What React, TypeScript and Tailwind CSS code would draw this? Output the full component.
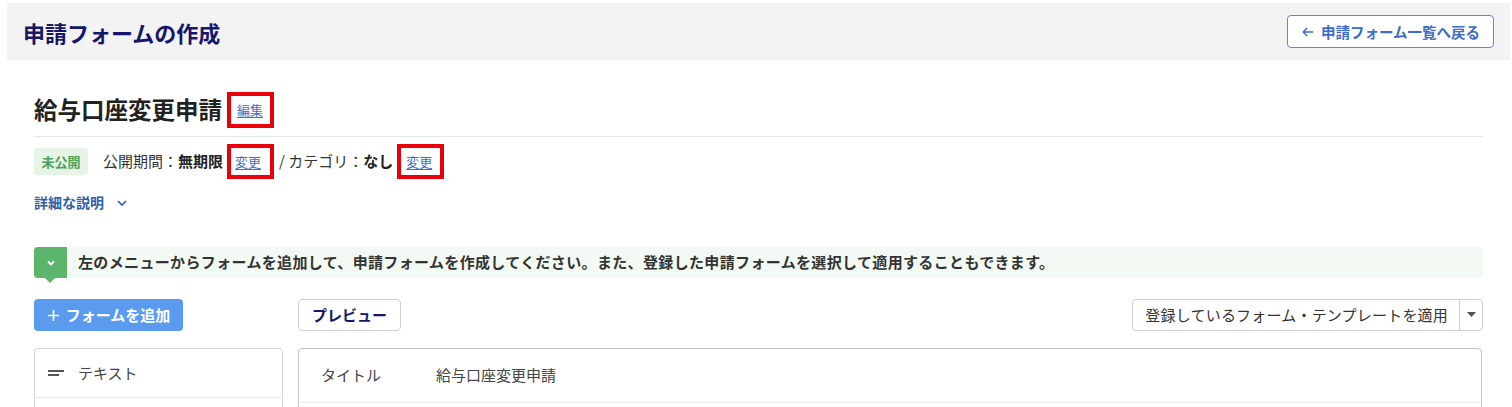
import React from "react";

const font = { fontFamily: '"Noto Sans CJK JP", "Noto Sans", sans-serif' };

function Link({ children }: { children: React.ReactNode }) {
  return (
    <span className="text-[13px] text-[#3f6fc6] underline underline-offset-2">{children}</span>
  );
}

export default function App() {
  return (
    <div style={font} className="bg-white w-[1512px] h-[407px] overflow-hidden pt-[3px] pl-[7px] pr-[2px] text-[#333]">
      {/* header */}
      <div className="h-[57px] bg-[#f3f3f3] flex items-center justify-between pl-4 pr-4">
        <h1 className="text-[22px] font-bold text-[#16166a] leading-none">申請フォームの作成</h1>
        <button className="h-[33px] w-[207px] flex items-center justify-center gap-1.5 bg-white border border-[#5b8ad6] rounded text-[#3a6cc8] text-[14.5px] font-bold">
          <svg width="14" height="14" viewBox="0 0 16 16" fill="none" stroke="currentColor" strokeWidth="1.6">
            <path d="M14 8H2.5M7 3.5L2.5 8 7 12.5" />
          </svg>
          申請フォーム一覧へ戻る
        </button>
      </div>

      <div className="px-[27px]">
        {/* title */}
        <div className="mt-[32px] h-[36px] flex items-center">
          <h2 className="text-[23.5px] font-bold text-[#222] leading-none">給与口座変更申請</h2>
          <div className="ml-[5px] h-[36px] w-[47px] border-[4px] border-[#e8000b] flex items-center pl-[6px]">
            <Link>編集</Link>
          </div>
        </div>
        <div className="mt-[8px] h-px bg-[#e6e6e6]" />

        {/* status row */}
        <div className="mt-[7px] h-[35px] flex items-center text-[15px] text-[#333]">
          <span className="h-[27px] w-[54px] rounded bg-[#e6f4e8] text-[#4ba25a] text-[13px] font-bold flex items-center justify-center">未公開</span>
          <span className="ml-[15px]">公開期間：</span>
          <span className="font-bold text-[#222]">無期限</span>
          <div className="ml-[4px] h-[35px] w-[47px] border-[4px] border-[#e8000b] flex items-center pl-[4px]">
            <Link>変更</Link>
          </div>
          <span className="ml-[5px]">/ カテゴリ：</span>
          <span className="font-bold text-[#222]">なし</span>
          <div className="ml-[4px] h-[35px] w-[47px] border-[4px] border-[#e8000b] flex items-center pl-[5px]">
            <Link>変更</Link>
          </div>
        </div>

        {/* details */}
        <div className="mt-[13px] flex items-center gap-[12px] text-[14px] font-bold text-[#2e5faa]">
          <span>詳細な説明</span>
          <svg width="12" height="12" viewBox="0 0 12 12" fill="none" stroke="currentColor" strokeWidth="1.6">
            <path d="M2 4l4 4 4-4" />
          </svg>
        </div>

        {/* banner */}
        <div className="mt-[34px] h-[31px] bg-[#f3faf4] rounded-r flex items-center">
          <div className="relative h-[31px] w-[33px] bg-[#5bb56b] rounded-l flex items-center justify-center">
            <svg width="10" height="10" viewBox="0 0 10 10" fill="none" stroke="white" strokeWidth="1.8">
              <path d="M2 3.5l3 3 3-3" />
            </svg>
            <div className="absolute left-[11px] -bottom-[5px] w-0 h-0 border-l-[5px] border-r-[5px] border-t-[5px] border-l-transparent border-r-transparent border-t-[#5bb56b]" />
          </div>
          <span className="ml-[11px] text-[15px] tracking-[0.35px] font-bold text-[#333]">
            左のメニューからフォームを追加して、申請フォームを作成してください。また、登録した申請フォームを選択して適用することもできます。
          </span>
        </div>

        {/* buttons row */}
        <div className="mt-[21px] grid grid-cols-[249px_1fr] gap-x-[15px]">
          <div>
            <button className="h-[32px] w-[149px] bg-[#5b9bef] rounded text-white text-[15px] font-bold flex items-center justify-center gap-1.5">
              <svg width="13" height="13" viewBox="0 0 14 14" fill="none" stroke="white" strokeWidth="1.8">
                <path d="M7 1v12M1 7h12" />
              </svg>
              フォームを追加
            </button>
          </div>
          <div className="flex items-center justify-between">
            <button className="h-[32px] w-[103px] bg-white border border-[#cfcfcf] rounded text-[#16166a] text-[15px] font-bold">
              プレビュー
            </button>
            <div className="h-[32px] flex border border-[#cfcfcf] rounded bg-white">
              <span className="pl-[12px] pr-[11px] flex items-center text-[15px] tracking-[0.2px] text-[#333]">登録しているフォーム・テンプレートを適用</span>
              <span className="w-[23px] border-l border-[#cfcfcf] flex items-center justify-center">
                <svg width="9" height="6" viewBox="0 0 9 6"><path d="M0 0h9L4.5 5z" fill="#555" /></svg>
              </span>
            </div>
          </div>

          {/* panels */}
          <div className="mt-[17px] h-[80px] border border-[#d6d6d6] rounded-t">
            <div className="h-[49px] flex items-center border-b border-[#e9e9e9] pl-[13px]">
              <svg width="16" height="8" viewBox="0 0 16 8">
                <rect x="0" y="1" width="16" height="2" fill="#555" />
                <rect x="0" y="5" width="11" height="2" fill="#555" />
              </svg>
              <span className="ml-[14px] text-[15px] text-[#444]">テキスト</span>
            </div>
          </div>
          <div className="mt-[17px] h-[80px] border border-[#c4c4c4] rounded-t mr-px">
            <div className="h-[54px] flex items-center border-b border-[#ececec] pl-[22px] text-[15px] text-[#444]">
              <span className="w-[115px]">タイトル</span>
              <span>給与口座変更申請</span>
            </div>
          </div>
        </div>
      </div>
    </div>
  );
}
